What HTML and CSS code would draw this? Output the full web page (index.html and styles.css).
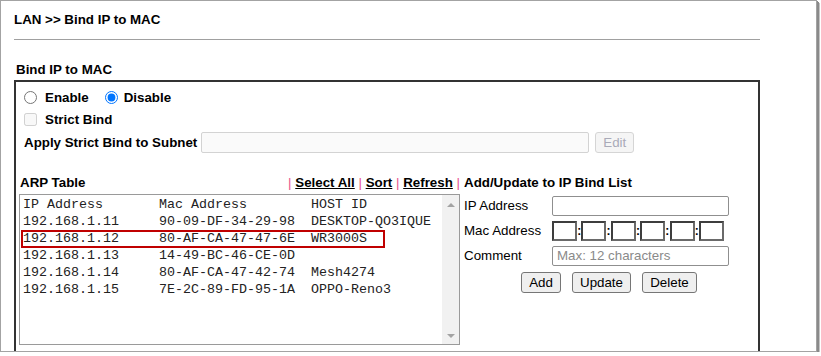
FILE: index.html
```html
<!DOCTYPE html>
<html>
<head>
<meta charset="utf-8">
<link rel="stylesheet" href="styles.css">
</head>
<body>
<div class="frame">
  <div class="title">LAN &gt;&gt; Bind IP to MAC</div>
  <div class="rule"></div>
  <div class="section-title">Bind IP to MAC</div>
  <div class="box">
    <div class="opts">
      <input type="radio" name="mode" class="radio r-enable"><span class="lbl-enable">Enable</span>
      <input type="radio" name="mode" class="radio r-disable" checked><span>Disable</span>
    </div>
    <div class="opts strict">
      <input type="checkbox" class="check" disabled><span>Strict Bind</span>
    </div>
    <div class="opts subnet">
      <span>Apply Strict Bind to Subnet</span>
      <input type="text" class="subnet-input" disabled>
      <button class="edit-btn" disabled>Edit</button>
    </div>
    <div class="arp">
      <div class="arp-left">
        <div class="arp-head">
          <span class="bold">ARP Table</span>
          <span class="links"><span class="pipe">|</span> <a href="#">Select All</a> <span class="pipe">|</span> <a href="#">Sort</a> <span class="pipe">|</span> <a href="#">Refresh</a> <span class="pipe">|</span></span>
        </div>
        <div class="list">
          <div class="line">IP Address       Mac Address        HOST ID</div>
          <div class="line">192.168.1.11     90-09-DF-34-29-98  DESKTOP-QO3IQUE</div>
          <div class="line marked">192.168.1.12     80-AF-CA-47-47-6E  WR3000S</div>
          <div class="line">192.168.1.13     14-49-BC-46-CE-0D</div>
          <div class="line">192.168.1.14     80-AF-CA-47-42-74  Mesh4274</div>
          <div class="line">192.168.1.15     7E-2C-89-FD-95-1A  OPPO-Reno3</div>
          <div class="scrollbar"><span class="arrow up"></span><span class="arrow down"></span></div>
        </div>
      </div>
      <div class="arp-right">
        <div class="bold head">Add/Update to IP Bind List</div>
        <div class="form">
          <span>IP Address</span>
          <input type="text" class="field">
          <span>Mac Address</span>
          <div class="mac">
            <input type="text" class="macbox"><span class="colon">:</span><input type="text" class="macbox"><span class="colon">:</span><input type="text" class="macbox"><span class="colon">:</span><input type="text" class="macbox"><span class="colon">:</span><input type="text" class="macbox"><span class="colon">:</span><input type="text" class="macbox">
          </div>
          <span>Comment</span>
          <input type="text" class="field" placeholder="Max: 12 characters">
        </div>
        <div class="buttons">
          <button class="btn btn-add">Add</button>
          <button class="btn btn-update">Update</button>
          <button class="btn btn-delete">Delete</button>
        </div>
      </div>
    </div>
  </div>
</div>
</body>
</html>
```
FILE: styles.css
```css
html, body {
  margin: 0;
  padding: 0;
  background: #fff;
}
body {
  font-family: "Liberation Sans", Arial, sans-serif;
  font-size: 13.333px;
  color: #000;
}
.frame {
  box-sizing: border-box;
  width: 817px;
  height: 352px;
  border: 1px solid #a3a3a3;
  box-shadow: 1px 1px 0 #8a8a8a, 2px 2px 0 #8a8a8a, 3px 3px 0 #c4c4c4;
  overflow: hidden;
  padding-left: 13px;
}
.title {
  font-weight: bold;
  line-height: 16px;
  margin-top: 11px;
}
.rule {
  width: 746px;
  height: 1px;
  background: #a0a0a0;
  margin-top: 11px;
}
.section-title {
  font-weight: bold;
  line-height: 16px;
  margin: 22px 0 0 2px;
}
.box {
  box-sizing: border-box;
  width: 746px;
  height: 300px;
  border: 2px solid #333;
  margin-top: 2px;
}
.opts {
  display: flex;
  align-items: center;
  height: 22px;
  margin-top: 4px;
  padding-left: 8px;
  font-weight: bold;
}
.opts.strict {
  margin-top: 0;
}
.opts.subnet {
  margin-top: 1px;
}
.radio, .check {
  margin: 0;
  width: 13px;
  height: 13px;
}
.r-enable { margin-right: 8px; }
.lbl-enable { margin-right: 16px; }
.r-disable { margin-right: 6px; }
.check { margin-right: 8px; }
.subnet-input {
  box-sizing: border-box;
  width: 388px;
  height: 21px;
  margin: 0 0 0 4px;
  border: 1px solid #d3d3d3;
  border-radius: 2px;
  background: #fafafa;
}
.edit-btn {
  box-sizing: border-box;
  width: 39px;
  height: 21px;
  margin-left: 6px;
  padding: 0;
  border: 1px solid #d5d5d5;
  border-radius: 3px;
  background: #f5f5f5;
  color: #a9aab8;
  font-family: "Liberation Sans", Arial, sans-serif;
  font-size: 13.333px;
}
.arp {
  display: flex;
  margin-top: 22px;
  padding-left: 3px;
}
.arp-left {
  width: 441px;
}
.arp-head {
  display: flex;
  justify-content: space-between;
  line-height: 16px;
  padding-left: 1px;
}
.bold { font-weight: bold; }
.links {
  font-weight: bold;
}
.links a {
  color: #000;
  text-decoration: underline;
}
.pipe {
  color: #e8508a;
  font-weight: normal;
}
.list {
  position: relative;
  box-sizing: border-box;
  height: 151px;
  margin-top: 3px;
  border: 1px solid #9a9a9a;
  padding: 1px 0 0 3px;
  font-family: "Liberation Mono", "Courier New", monospace;
  font-size: 13.333px;
  color: #222;
}
.line {
  position: relative;
  white-space: pre;
  line-height: 17px;
}
.marked::after {
  content: "";
  position: absolute;
  left: -2px;
  top: 0;
  width: 364px;
  height: 18px;
  box-sizing: border-box;
  border: 2px solid #c00000;
}
.scrollbar {
  position: absolute;
  top: 0;
  right: 0;
  bottom: 0;
  width: 17px;
  background: #f1f1f1;
}
.arrow {
  position: absolute;
  left: 5px;
  width: 0;
  height: 0;
  border-left: 4px solid transparent;
  border-right: 4px solid transparent;
}
.arrow.up {
  top: 8px;
  border-bottom: 4px solid #a3a3a3;
}
.arrow.down {
  bottom: 6px;
  border-top: 4px solid #a3a3a3;
}
.arp-right {
  width: 290px;
  margin-left: 4px;
}
.head {
  line-height: 16px;
}
.form {
  display: grid;
  grid-template-columns: 88px auto;
  grid-auto-rows: 25px;
  align-items: center;
  margin-top: 2px;
}
.field {
  box-sizing: border-box;
  width: 177px;
  height: 20px;
  margin: 0;
  border: 1px solid #8f8f8f;
  border-radius: 2px;
  padding: 0 4px;
  font-family: "Liberation Sans", Arial, sans-serif;
  font-size: 13.333px;
}
.field::placeholder {
  color: #8a8a8a;
}
.mac {
  display: flex;
  align-items: center;
}
.macbox {
  box-sizing: border-box;
  width: 25px;
  height: 20px;
  margin: 0;
  padding: 0;
  border: 2px solid;
  border-color: #3e3e3e #6a6a6a #6a6a6a #3e3e3e;
}
.colon {
  width: 4.4px;
  font-size: 12px;
  font-weight: bold;
  line-height: 20px;
  display: flex;
  justify-content: center;
}
.buttons {
  display: flex;
  justify-content: center;
  gap: 11px;
  margin-top: 4px;
}
.btn {
  box-sizing: border-box;
  height: 21px;
  padding: 0;
  border: 1px solid #767676;
  border-radius: 3px;
  background: #efefef;
  color: #000;
  font-family: "Liberation Sans", Arial, sans-serif;
  font-size: 13.333px;
}
.btn-add { width: 40px; }
.btn-update { width: 59px; }
.btn-delete { width: 55px; }
```
